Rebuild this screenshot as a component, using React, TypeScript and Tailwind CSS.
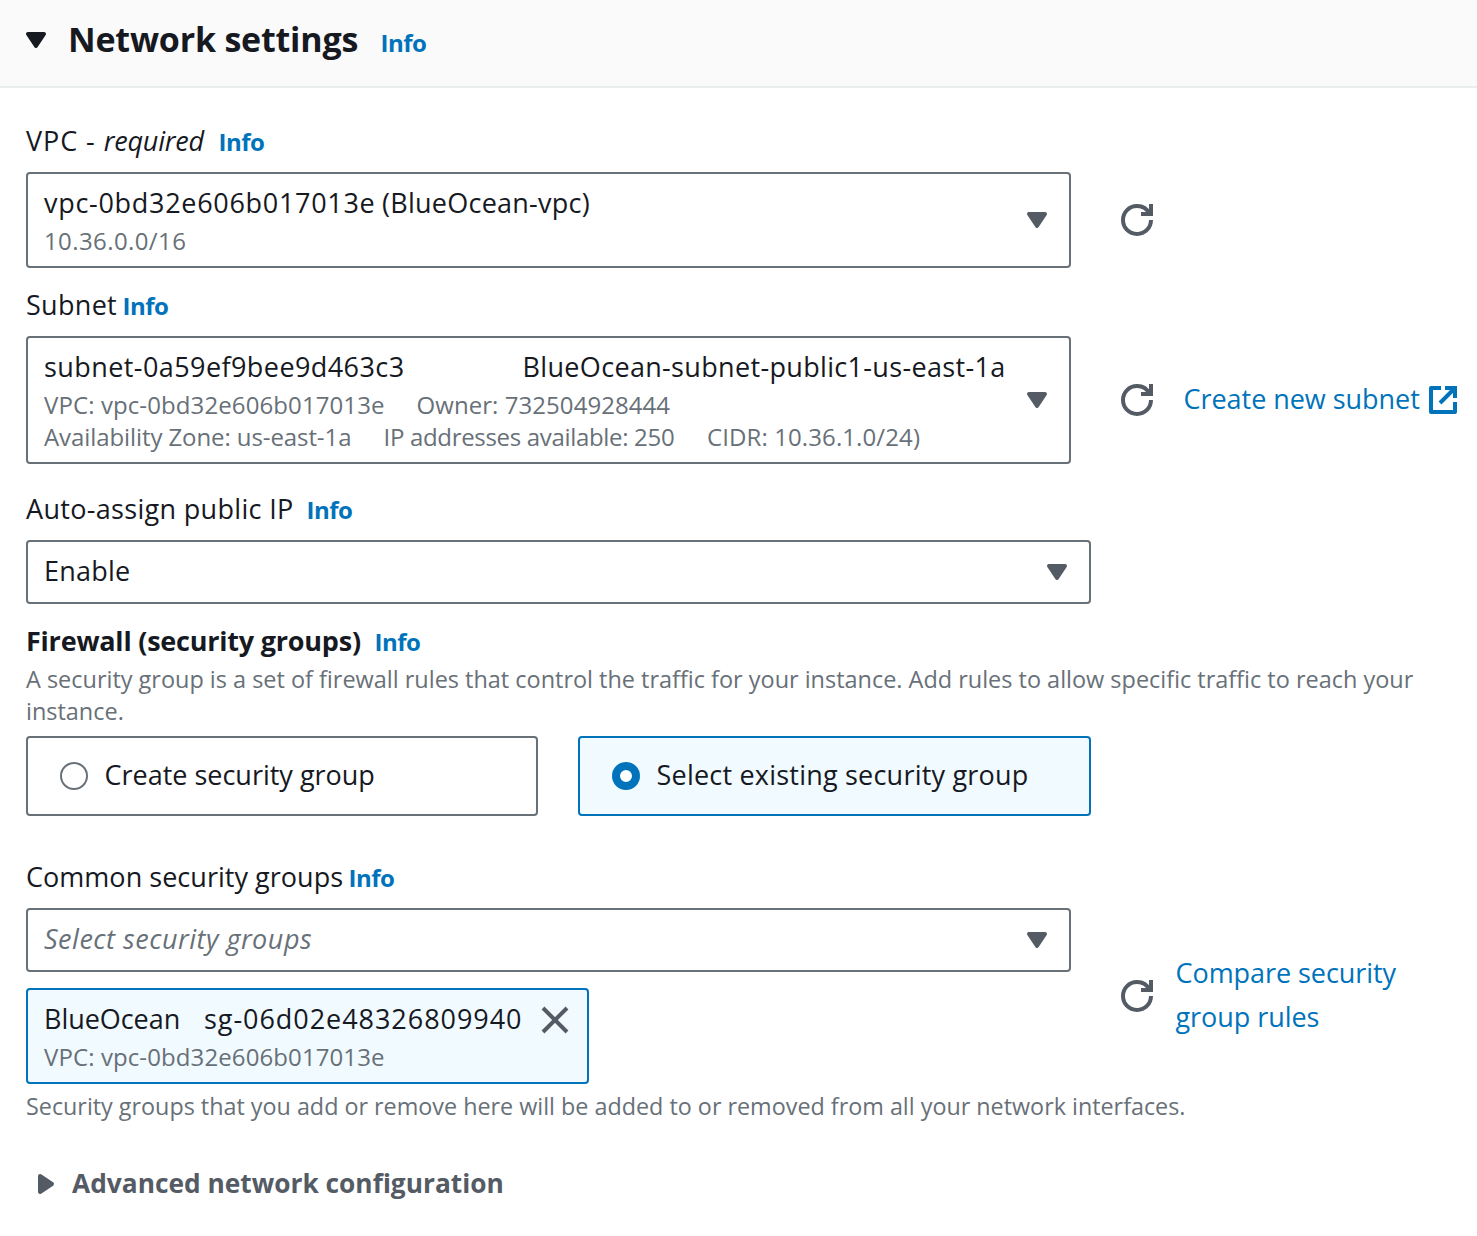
import React from "react";

function Caret({ className = "" }: { className?: string }) {
  return (
    <svg viewBox="0 0 16 16" className={`size-8 shrink-0 ${className}`} fill="currentColor" stroke="currentColor" strokeWidth="2" strokeLinejoin="round">
      <path d="M4 5h8l-4 6-4-6z" />
    </svg>
  );
}

function Refresh() {
  return (
    <button className="ml-[50px] shrink-0 text-[#545b64]" aria-label="Refresh">
      <svg viewBox="0 0 16 16" className="block size-8 overflow-visible" fill="none" stroke="currentColor" strokeWidth="2">
        <path d="M10 5h5V0" />
        <path d="M15 8a6.957 6.957 0 0 1-7 7 6.957 6.957 0 0 1-7-7 6.957 6.957 0 0 1 7-7 6.87 6.87 0 0 1 6.3 4" />
      </svg>
    </button>
  );
}

function External() {
  return (
    <svg viewBox="0 0 16 16" className="size-8 shrink-0" fill="none" stroke="currentColor" strokeWidth="2">
      <path strokeLinejoin="round" d="M7 2H2v12h12V9" />
      <path d="M9 2h5v5M6.5 9.5 14 2" />
    </svg>
  );
}

function Close() {
  return (
    <svg viewBox="0 0 16 16" className="block size-8" fill="none" stroke="currentColor" strokeWidth="2">
      <path d="m2 2 12 12M14 2 2 14" />
    </svg>
  );
}

function Info() {
  return <a className="text-2xl leading-8 font-bold tracking-[-0.5px] text-[#0073bb]">Info</a>;
}

function Label({ width, children }: { width: string; children: React.ReactNode }) {
  return (
    <div className="flex h-11 items-baseline leading-11 whitespace-nowrap">
      <span className={`shrink-0 ${width}`}>{children}</span>
      <Info />
    </div>
  );
}

function Select({ className = "", children }: { className?: string; children: React.ReactNode }) {
  return (
    <div className={`flex shrink-0 items-center justify-between rounded-[4px] border-2 border-[#687078] bg-white px-4 leading-11 whitespace-nowrap ${className}`}>
      <div className="-mt-0.5">{children}</div>
      <Caret className="-ml-8 text-[#545b64]" />
    </div>
  );
}

export default function App() {
  return (
    <main className="h-[1236px] w-[1477px] overflow-hidden bg-white font-['Open_Sans',sans-serif] text-[27px] text-[#16191f]">
      <header className="flex h-[88px] items-baseline border-b-2 border-[#eaeded] bg-[#fafafa] pt-3.5 pl-5">
        <Caret className="translate-y-1" />
        <h2 className="ml-4 w-[312.5px] shrink-0 text-[34px] leading-[50px] font-bold tracking-[-0.2px] whitespace-nowrap">Network settings</h2>
        <Info />
      </header>

      <div className="pt-[31px] pl-[26px]">
        <section>
          <Label width="w-[192.5px]">
            <span className="tracking-[0.9px]">VPC</span>
            <span className="ml-2">-</span>
            <i className="ml-[9px] tracking-[-0.2px]">required</i>
          </Label>
          <div className="mt-[9px] flex items-center">
            <Select className="h-24 w-[1045px]">
              <div className="flex">
                <span className="w-[338px] tracking-[0.7px]">vpc-0bd32e606b017013e</span>
                <span className="tracking-[0.25px]">(BlueOcean-vpc)</span>
              </div>
              <div className="text-2xl leading-8 tracking-[0.4px] text-[#687078]">10.36.0.0/16</div>
            </Select>
            <Refresh />
          </div>
        </section>

        <section className="mt-[15px]">
          <Label width="w-[96.5px]">
            <span className="tracking-[0.3px]">Subnet</span>
          </Label>
          <div className="mt-[9px] flex items-center">
            <Select className="h-32 w-[1045px]">
              <div className="flex">
                <span className="w-[478.5px] tracking-[0.42px]">subnet-0a59ef9bee9d463c3</span>
                <span className="tracking-[0.33px]">BlueOcean-subnet-public1-us-east-1a</span>
              </div>
              <div className="flex text-2xl leading-8 text-[#687078]">
                <span className="w-[372.5px] tracking-[0.1px]">VPC: vpc-0bd32e606b017013e</span>
                <span className="tracking-[0.06px]">Owner: 732504928444</span>
              </div>
              <div className="flex text-2xl leading-8 text-[#687078]">
                <span className="w-[339.5px] tracking-[-0.09px]">Availability Zone: us-east-1a</span>
                <span className="w-[323.5px] tracking-[-0.32px]">IP addresses available: 250</span>
                <span className="tracking-[0.1px]">CIDR: 10.36.1.0/24)</span>
              </div>
            </Select>
            <Refresh />
            <a className="ml-[30.5px] flex shrink-0 items-center whitespace-nowrap text-[#0073bb]">
              <span className="w-[243.5px] pb-0.5 leading-11 tracking-[-0.04px]">Create new subnet</span>
              <External />
            </a>
          </div>
        </section>

        <section className="mt-[23px]">
          <Label width="w-[280.5px]">
            <span className="tracking-[0.316px]">Auto-assign public IP</span>
          </Label>
          <Select className="mt-[9px] h-16 w-[1065px]">
            <div className="tracking-[0.2px]">Enable</div>
          </Select>
        </section>

        <section className="mt-[15px]">
          <Label width="w-[348.5px]">
            <b className="tracking-[-0.22px]">Firewall (security groups)</b>
          </Label>
          <p className="w-[1420px] text-[23.46px] leading-8 text-[#687078]">
            A security group is a set of firewall rules that control the traffic for your instance. Add rules to allow specific traffic to reach your instance.
          </p>
          <div className="mt-[9px] flex gap-10">
            <label className="flex h-20 w-[512px] items-center rounded-[4px] border-2 border-[#687078] pl-8">
              <span className="size-7 rounded-full border-2 border-[#687078] bg-white" />
              <span className="ml-[16.5px] pb-0.5 leading-11 tracking-[-0.01px]">Create security group</span>
            </label>
            <label className="flex h-20 w-[513px] items-center rounded-[4px] border-2 border-[#0073bb] bg-[#f1faff] pl-8">
              <span className="size-7 rounded-full border-8 border-[#0073bb] bg-white" />
              <span className="ml-[16.5px] pb-0.5 leading-11 tracking-[0.21px]">Select existing security group</span>
            </label>
          </div>
        </section>

        <section className="mt-[39px]">
          <Label width="w-[322.5px]">
            <span className="tracking-[0.03px]">Common security groups</span>
          </Label>
          <div className="mt-[9px] flex items-center">
            <div className="flex shrink-0 flex-col items-start gap-4">
              <Select className="h-16 w-[1045px]">
                <i className="tracking-[0.514px] text-[#687078]">Select security groups</i>
              </Select>
              <div className="flex h-24 w-[563px] justify-between rounded-[4px] border-2 border-[#0073bb] bg-[#f1faff] pt-[7px] pr-4 pl-4 whitespace-nowrap">
                <div>
                  <div className="flex leading-11">
                    <span className="w-[160px] tracking-[-0.05px]">BlueOcean</span>
                    <span className="tracking-[0.95px]">sg-06d02e48326809940</span>
                  </div>
                  <div className="text-2xl leading-8 tracking-[0.1px] text-[#687078]">VPC: vpc-0bd32e606b017013e</div>
                </div>
                <button className="mt-[7px] size-8 text-[#545b64]" aria-label="Remove BlueOcean">
                  <Close />
                </button>
              </div>
            </div>
            <Refresh />
            <a className="ml-[22.5px] w-[240px] pb-0.5 leading-11 tracking-[-0.06px] text-[#0073bb]">Compare security group rules</a>
          </div>
          <p className="mt-1.5 text-[23.34px] leading-8 text-[#687078]">
            Security groups that you add or remove here will be added to or removed from all your network interfaces.
          </p>
        </section>

        <div className="mt-[39px] flex items-center pl-1 text-[#545b64]">
          <Caret className="-rotate-90" />
          <b className="ml-2.5 pb-0.5 text-[26.3px] leading-11">Advanced network configuration</b>
        </div>
      </div>
    </main>
  );
}
